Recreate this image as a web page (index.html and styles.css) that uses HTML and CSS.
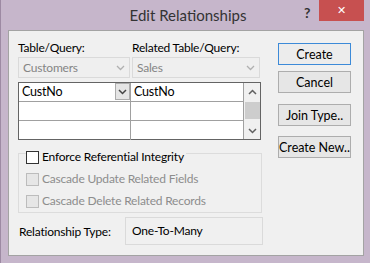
FILE: index.html
```html
<!DOCTYPE html>
<html lang="en">
<head>
  <meta charset="UTF-8">
  <title>Edit Relationships</title>
  <link rel="stylesheet" href="styles.css">
</head>
<body>

  <div class="window">
    <div class="titlebar">
      <div class="title">Edit Relationships</div>
      <div class="help">?</div>
      <div class="close">&#10005;</div>
    </div>

    <div class="client">
      <div class="main">
        <div class="labels">
          <span class="col-left">Table/Query:</span>
          <span class="col-right">Related Table/Query:</span>
        </div>
        <div class="combos">
          <div class="combo col-left">Customers <span class="chev"><svg width="9" height="6" viewBox="0 0 9 6"><path d="M1 1 L4.5 4.5 L8 1" fill="none" stroke="#b0b0b0" stroke-width="1.3"/></svg></span></div>
          <div class="combo col-right">Sales <span class="chev"><svg width="9" height="6" viewBox="0 0 9 6"><path d="M1 1 L4.5 4.5 L8 1" fill="none" stroke="#b0b0b0" stroke-width="1.3"/></svg></span></div>
        </div>

        <div class="grid">
          <div class="rows">
            <div class="row">
              <div class="cell cell-left">CustNo<span class="drop"><svg width="9" height="6" viewBox="0 0 9 6"><path d="M1 1 L4.5 4.5 L8 1" fill="none" stroke="#444" stroke-width="1.5"/></svg></span></div>
              <div class="cell">CustNo</div>
            </div>
            <div class="row">
              <div class="cell cell-left"></div>
              <div class="cell"></div>
            </div>
            <div class="row">
              <div class="cell cell-left"></div>
              <div class="cell"></div>
            </div>
          </div>
          <div class="scrollbar">
            <svg width="9" height="6" viewBox="0 0 9 6"><path d="M1 5 L4.5 1.5 L8 5" fill="none" stroke="#606060" stroke-width="1.5"/></svg>
            <div class="thumb"></div>
            <svg width="9" height="6" viewBox="0 0 9 6"><path d="M1 1 L4.5 4.5 L8 1" fill="none" stroke="#606060" stroke-width="1.5"/></svg>
          </div>
        </div>

        <div class="group">
          <label class="check first"><span class="box"></span>Enforce Referential Integrity</label>
          <label class="check disabled"><span class="box"></span>Cascade Update Related Fields</label>
          <label class="check disabled"><span class="box"></span>Cascade Delete Related Records</label>
        </div>

        <div class="reltype">
          <span class="rel-label">Relationship Type:</span>
          <span class="rel-value">One-To-Many</span>
        </div>
      </div>

      <div class="buttons">
        <button class="btn default">Create</button>
        <button class="btn">Cancel</button>
        <button class="btn spaced">Join Type..</button>
        <button class="btn">Create New..</button>
      </div>
    </div>
  </div>

</body>
</html>
```

FILE: styles.css
```css
body {
  margin: 0;
  padding: 0;
  background-color: #c6b6cb;
  font-family: Lato, "Noto Sans", sans-serif;
  font-size: 12px;
  letter-spacing: -0.2px;
  color: #000;
}
.window {
  width: 370px;
  height: 263px;
  box-sizing: border-box;
  border-left: 1px solid #9d8aa3;
  padding: 0 6px 0 7px;
}
.titlebar {
  position: relative;
  height: 30px;
}
.title {
  text-align: center;
  font-size: 15px;
  letter-spacing: 0;
  line-height: 31px;
  color: #333;
  padding-left: 4px;
}
.help {
  position: absolute;
  left: 296px;
  top: 4px;
  font-weight: bold;
  font-size: 14px;
  color: #333;
}
.close {
  position: absolute;
  left: 311px;
  top: 0;
  width: 45px;
  height: 21px;
  background-color: #c75050;
  color: #fff;
  font-family: "DejaVu Sans", sans-serif;
  font-size: 11px;
  font-weight: bold;
  text-align: center;
  line-height: 21px;
}
.client {
  display: flex;
  height: 226px;
  box-sizing: border-box;
  border: 1px solid #a3a3a3;
  background-color: #f0f0f0;
  padding: 9px 0 0 9px;
}
.main {
  width: 245px;
}
.labels {
  display: flex;
  height: 16px;
  line-height: 16px;
  margin-bottom: 1px;
}
.col-left {
  width: 112px;
  margin-right: 2px;
}
.col-right {
  width: 128px;
}
.combos {
  display: flex;
  height: 21px;
}
.combo {
  box-sizing: border-box;
  border: 1px solid #dadada;
  background-color: #efefef;
  color: #858585;
  padding: 0 4px;
  line-height: 19px;
  display: flex;
  justify-content: space-between;
  align-items: center;
}
.chev {
  display: flex;
}
.grid {
  display: flex;
  margin-top: 4px;
  width: 243px;
  height: 58px;
  box-sizing: border-box;
  border: 1px solid #646464;
  background-color: #fff;
}
.rows {
  flex: 1;
}
.row {
  display: flex;
  height: 19px;
  box-sizing: border-box;
  border-bottom: 1px solid #a0a0a0;
}
.row:last-child {
  border-bottom: none;
}
.cell {
  flex: 1;
  line-height: 18px;
  padding-left: 3px;
  font-size: 12.5px;
}
.cell-left {
  flex: 0 0 108px;
  border-right: 1px solid #a0a0a0;
  display: flex;
  justify-content: space-between;
}
.drop {
  width: 15px;
  height: 17px;
  box-sizing: border-box;
  border: 1px solid #acacac;
  background-color: #e5e5e5;
  display: flex;
  align-items: center;
  justify-content: center;
}
.scrollbar {
  width: 17px;
  border-left: 1px solid #a0a0a0;
  background-color: #f0f0f0;
  display: flex;
  flex-direction: column;
  align-items: center;
  justify-content: space-between;
  padding: 6px 0 5px;
  box-sizing: border-box;
}
.thumb {
  width: 15px;
  height: 17px;
  background-color: #cdcdcd;
  margin-top: -1px;
  margin-bottom: 2px;
}
.group {
  margin-top: 13px;
  width: 244px;
  height: 60px;
  box-sizing: border-box;
  border: 1px solid #dcdcdc;
  display: flex;
  flex-direction: column;
  padding-left: 7px;
}
.check {
  display: flex;
  align-items: center;
  height: 22px;
  line-height: 22px;
}
.check.first {
  margin-top: -8px;
  background-color: #f0f0f0;
  width: max-content;
  padding-right: 2px;
}
.box {
  width: 13px;
  height: 13px;
  box-sizing: border-box;
  border: 1px solid #333;
  background-color: #fff;
  margin-right: 3px;
}
.check.disabled {
  color: #8d8d8d;
}
.check.disabled .box {
  border-color: #bcbcbc;
  background-color: #e6e6e6;
}
.reltype {
  display: flex;
  align-items: center;
  margin-top: 4px;
}
.rel-label {
  width: 106px;
  padding-left: 1px;
}
.rel-value {
  width: 138px;
  height: 28px;
  box-sizing: border-box;
  border: 1px solid #dadada;
  line-height: 26px;
  padding-left: 6px;
}
.buttons {
  display: flex;
  flex-direction: column;
  margin-left: 15px;
  padding-top: 3px;
}
.btn {
  width: 73px;
  height: 22px;
  margin-bottom: 6px;
  box-sizing: border-box;
  border: 1px solid #adadad;
  background-color: #e6e6e6;
  font-family: Lato, "Noto Sans", sans-serif;
  font-size: 12.5px;
  white-space: nowrap;
  color: #000;
  padding: 0;
}
.btn.default {
  border-color: #3c8ad8;
  background-color: #ececec;
}
.btn.spaced {
  margin-top: 5px;
  margin-bottom: 10px;
}
```
